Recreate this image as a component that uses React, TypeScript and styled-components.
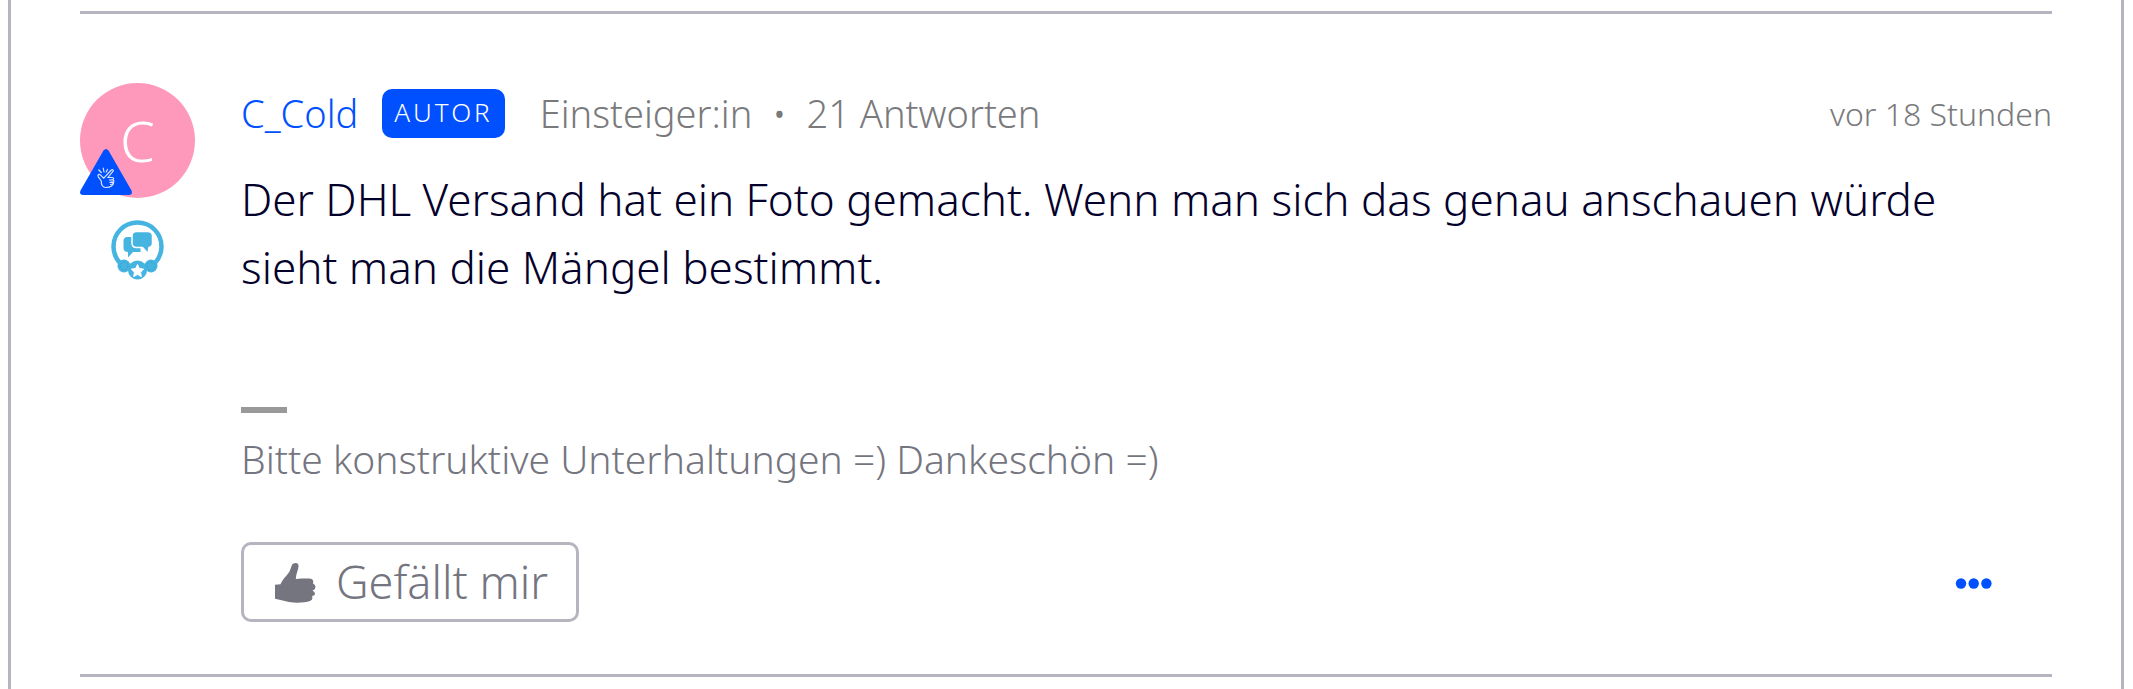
import React from "react";
import styled, { createGlobalStyle } from "styled-components";

const color = {
  blue: "#0050ff",
  line: "#b6b4bf",
  ink: "#03002b",
  muted: "#75757f",
  meta: "#7a7a7d",
  pink: "#ff99bb",
  sky: "#46b4e1",
};

const GlobalStyle = createGlobalStyle`
  *, *::before, *::after { box-sizing: border-box; }
  body {
    margin: 0;
    background: #fff;
    color: ${color.ink};
    font-family: "Noto Sans", "Open Sans", sans-serif;
    font-weight: 300;
  }
`;

const Thread = styled.main`
  min-height: 100vh;
  margin: 0 9px 0 8px;
  padding: 11px 69px 0;
  border: solid ${color.line};
  border-width: 0 3px;
`;

const Comment = styled.article`
  display: flex;
  gap: 46px;
  padding: 69px 0 52px;
  border: solid ${color.line};
  border-width: 3px 0;
`;

const Rail = styled.div`
  display: flex;
  flex: none;
  flex-direction: column;
  align-items: center;
  gap: 22px;
`;

const Avatar = styled.a`
  position: relative;
  display: flex;
  align-items: center;
  justify-content: center;
  width: 115px;
  height: 115px;
  padding-bottom: 2px;
  border-radius: 50%;
  background: ${color.pink};
  color: #fff;
  font-size: 56px;
  line-height: 80px;
  text-decoration: none;
`;

const RankMark = styled.svg`
  position: absolute;
  left: 0;
  bottom: 3px;
`;

const Content = styled.div`
  flex: 1;
  min-width: 0;
  padding-top: 5px;
`;

const Header = styled.header`
  display: flex;
  align-items: center;
  justify-content: space-between;
`;

const Byline = styled.div`
  display: flex;
  align-items: center;
  font-size: 38px;
  line-height: 50px;
`;

const UserName = styled.a`
  color: ${color.blue};
  text-decoration: none;
`;

const AuthorBadge = styled.span`
  margin: 0 35px 0 24px;
  padding: 0 12px 2px;
  border-radius: 10px;
  background: ${color.blue};
  color: #fff;
  font-size: 26px;
  line-height: 47px;
  letter-spacing: 3px;
`;

const Meta = styled.span`
  color: ${color.meta};
`;

const Separator = styled(Meta)`
  margin: 0 20px;
`;

const Time = styled.time`
  padding-top: 2px;
  color: ${color.meta};
  font-size: 32px;
  line-height: 48px;
`;

const Message = styled.p`
  margin: 27px 0 106px;
  padding-right: 60px;
  font-size: 44px;
  line-height: 68px;
`;

const Signature = styled.footer`
  color: ${color.muted};
  font-size: 39px;
  line-height: 60px;

  &::before {
    content: "";
    display: block;
    width: 46px;
    height: 6px;
    margin-bottom: 16px;
    background: #999;
  }
`;

const Actions = styled.div`
  display: flex;
  align-items: center;
  justify-content: space-between;
  margin-top: 53px;
  padding-right: 57px;
`;

const LikeButton = styled.button`
  display: flex;
  align-items: center;
  gap: 20px;
  height: 80px;
  padding: 0 28px 0 31px;
  border: 3px solid ${color.line};
  border-radius: 10px;
  background: #fff;
  color: ${color.muted};
  font: inherit;
  font-size: 45px;
  line-height: 60px;
`;

const MoreButton = styled.button`
  display: flex;
  padding: 5px 3px 3px;
  border: 0;
  background: none;
  color: ${color.blue};
`;

const SnapTriangle = () => (
  <RankMark width="52" height="46" viewBox="0 0 52 46" aria-hidden="true">
    <path d="M23.5 1.5Q26-1.500 28.500 1.500L51.500 41.500Q53 46 49 46H3Q-1 46 .5 41.500Z" fill={color.blue} />
    <g fill="none" stroke="#dbe6ff" strokeWidth="1.2" strokeLinecap="round" strokeLinejoin="round">
      <path d="M18.500 25.500q-1 1-.2 2.300l3 4.200c-.3 4 1.500 6.500 4.500 6.500 4 0 7.500-1.500 7.500-5.500" />
      <path d="M18.500 25.500q1-.5 1.800.4l3.500 3.300 7.500-8.200q1.800-1 2 .8L28 28.500" />
      <path d="M28 28.500h4.500q1.500.5.8 2l-3.800.5h3.500q1.300.5.6 1.900l-3.600.4h3q1 .6.200 1.700l-2.700.5" />
      <path d="M24 23l-.8-4M21.300 23.500l-2.500-2.500M26.200 23l1.300-2.500" />
    </g>
  </RankMark>
);

const ConversationAward = () => (
  <svg width="53" height="60" viewBox="0 0 53 60" role="img" aria-label="Auszeichnung">
    <circle cx="26.500" cy="26.500" r="24" fill="#fff" stroke={color.sky} strokeWidth="4.500" />
    <g fill={color.sky}>
      <path d="M16.500 17h13v15h-7.500l-5 5.500V32q-4.500 0-4.500-4v-7q0-4 4-4z" />
      <path
        d="M25.500 11.500h11q5 0 5 4.500v7q0 4-3.500 4.500L37 33.500l-5.500-6h-6q-4.500 0-4.500-4.500v-7q0-4.500 4.500-4.500z"
        stroke="#fff"
        strokeWidth="1.500"
      />
      <circle cx="13" cy="46" r="6.500" />
      <circle cx="40" cy="46" r="6.500" />
      <circle cx="26.500" cy="50" r="9.500" />
    </g>
    <g fill="none" stroke="#369fcd" strokeWidth="1" strokeDasharray="2 1.500">
      <circle cx="13" cy="46" r="4" />
      <circle cx="40" cy="46" r="4" />
    </g>
    <path
      d="M26.500 44.500l1.900 4 4.300.6-3.100 3.100.7 4.400-3.800-2.100-3.800 2.100.7-4.400-3.100-3.100 4.300-.6z"
      fill="#fff"
      stroke="#fff"
      strokeLinejoin="round"
    />
  </svg>
);

const ThumbUp = () => (
  <svg width="41" height="42" viewBox="0 -2 41 42" aria-hidden="true">
    <path
      d="M0 21.700L5.500 21.200C7 17 11 13.500 13.300 10.300C15.500 7.500 16 4 17 1.700Q18 0 20.700 0Q23.700.2 23.500 3.500C23.300 7 21 10.500 20.800 15.900C27 15.600 32 15.300 36 15.700Q39 16.500 38 20.500Q42 22.500 39.500 26.500L37.500 27.500Q41.500 30 39 32.500L37 33Q38.500 36.500 35 38C30 39.700 21 40.200 14 39L0 35.800Z"
      fill={color.muted}
    />
  </svg>
);

const Dots = () => (
  <svg width="37" height="11" viewBox="0 0 37 11" fill="currentColor" aria-hidden="true">
    <circle cx="6" cy="5.500" r="5.200" />
    <circle cx="18.700" cy="5.500" r="5.200" />
    <circle cx="31.400" cy="5.500" r="5.200" />
  </svg>
);

export default function App() {
  return (
    <>
      <GlobalStyle />
      <Thread>
        <Comment>
          <Rail>
            <Avatar href="#profil" aria-label="Profil von C_Cold">
              C
              <SnapTriangle />
            </Avatar>
            <ConversationAward />
          </Rail>
          <Content>
            <Header>
              <Byline>
                <UserName href="#profil">C_Cold</UserName>
                <AuthorBadge>AUTOR</AuthorBadge>
                <Meta>Einsteiger:in</Meta>
                <Separator>•</Separator>
                <Meta>21 Antworten</Meta>
              </Byline>
              <Time>vor 18 Stunden</Time>
            </Header>
            <Message>
              Der DHL Versand hat ein Foto gemacht. Wenn man sich das genau anschauen würde sieht man die
              Mängel bestimmt.
            </Message>
            <Signature>Bitte konstruktive Unterhaltungen =) Dankeschön =)</Signature>
            <Actions>
              <LikeButton type="button">
                <ThumbUp />
                Gefällt mir
              </LikeButton>
              <MoreButton type="button" aria-label="Weitere Optionen">
                <Dots />
              </MoreButton>
            </Actions>
          </Content>
        </Comment>
      </Thread>
    </>
  );
}
